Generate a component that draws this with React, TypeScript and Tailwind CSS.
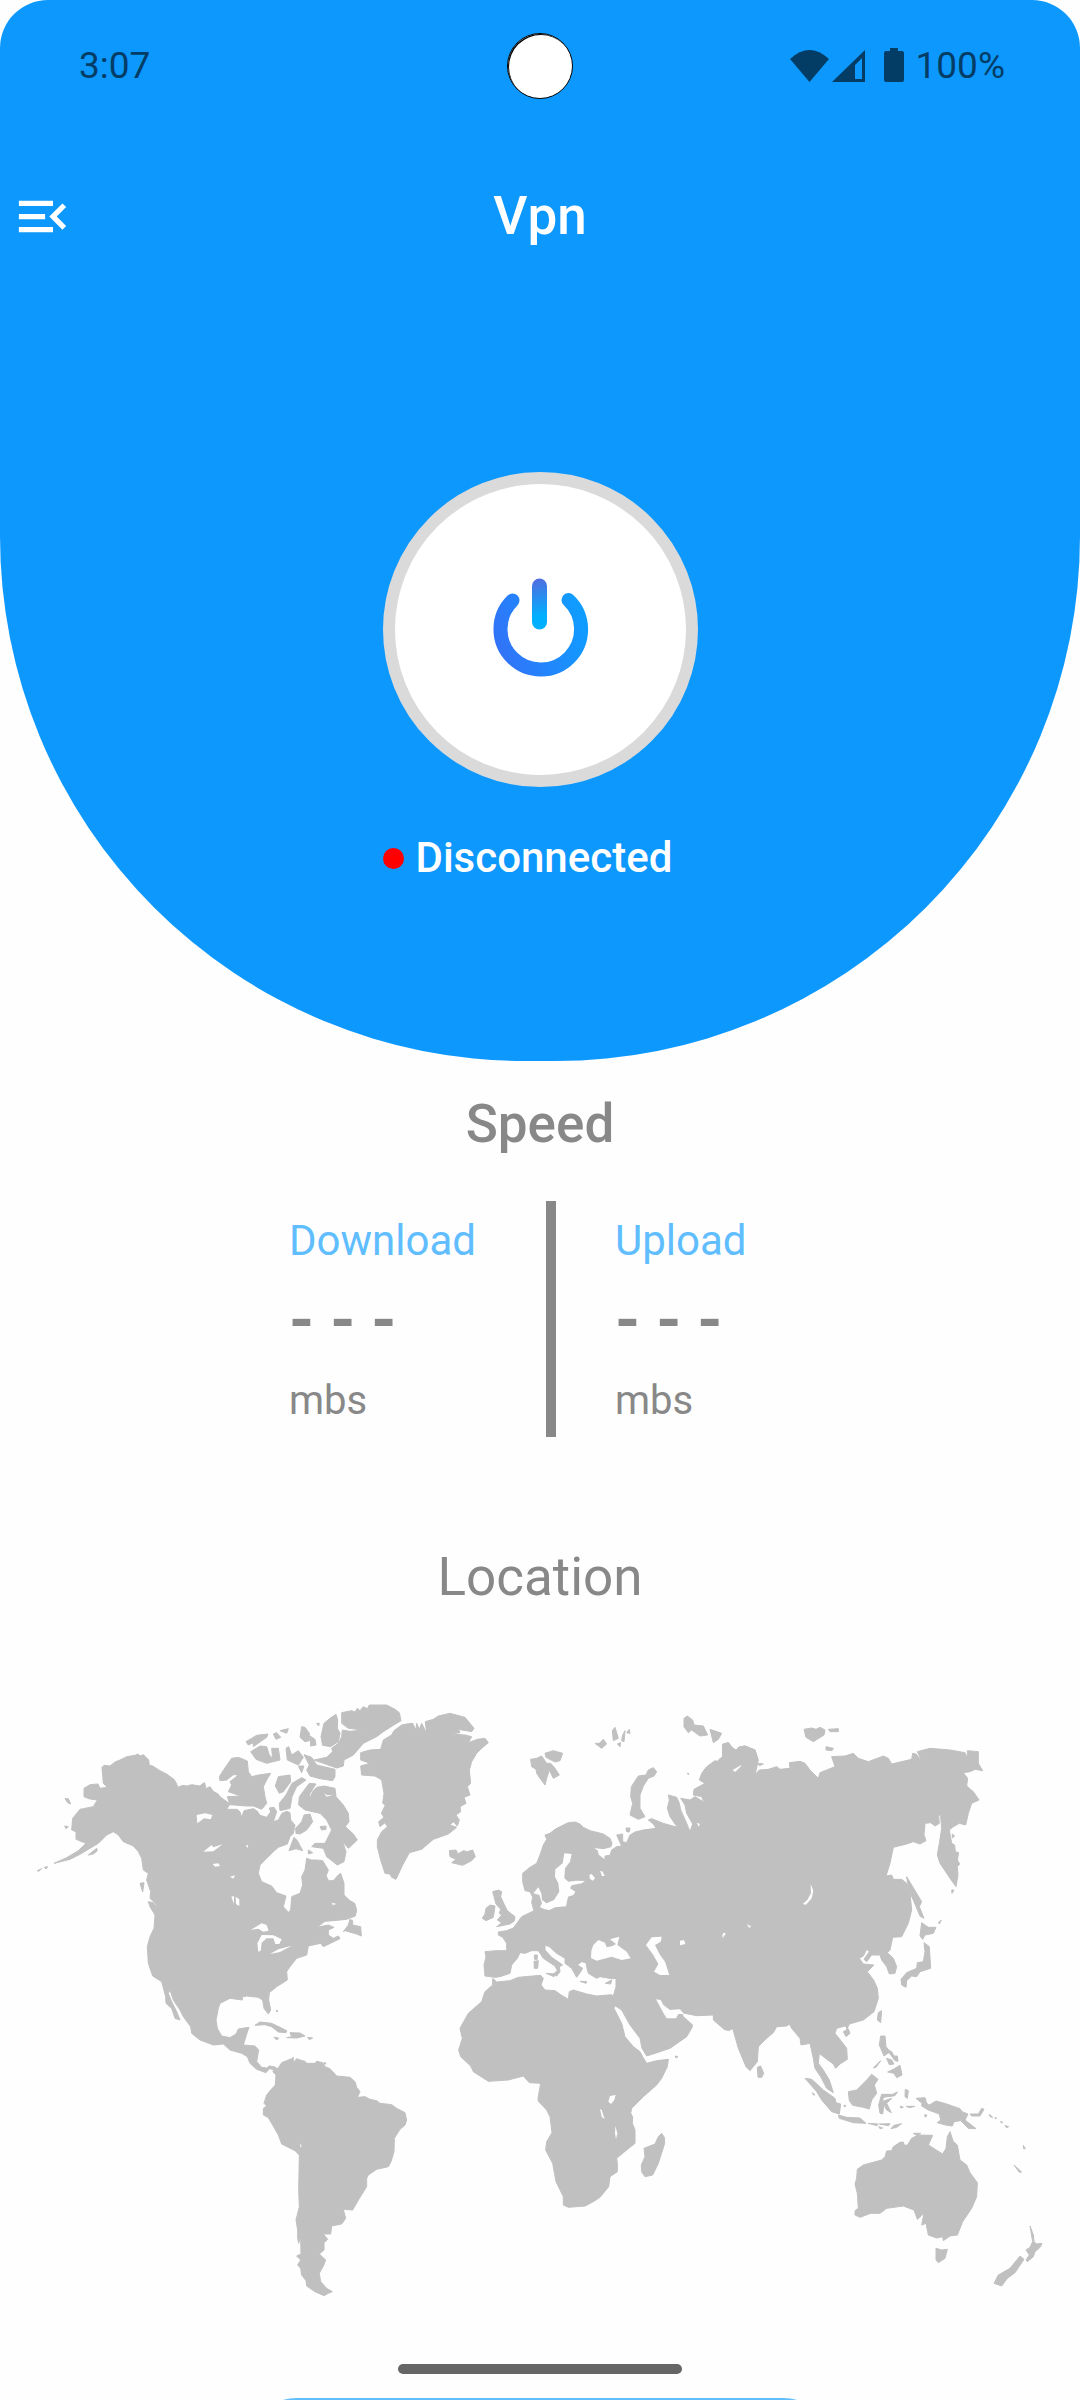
import React from "react";
import { MdMenuOpen } from "react-icons/md";

function StatusBar() {
  return (
    <div className="relative flex h-[132px] items-center justify-between pr-[75px] pl-[79px] text-[37px] leading-[44px] text-[#033d66]">
      <span>3:07</span>
      <span
        aria-hidden="true"
        className="absolute left-1/2 top-[33px] size-[66px] -translate-x-1/2 rounded-full border border-black bg-white shadow-[inset_1px_1px_0_#000]"
      />
      <div className="flex items-center">
        <svg viewBox="0 0 116 36" className="h-9 w-[116px]" aria-hidden="true" fill="currentColor">
          <path d="M0 11 Q19.500 -7 39 11 L19.500 34Z" />
          <path fillRule="evenodd" d="M42 34 75 2V34ZM65 31h7V10l-7 7Z" />
          <path d="M100 0h8v3h4q2 0 2 2v27q0 2-2 2H96q-2 0-2-2V5q0-2 2-2h4Z" />
        </svg>
        <span className="ml-2.5">100%</span>
      </div>
    </div>
  );
}

function PowerIcon() {
  return (
    <svg viewBox="0 0 120 120" className="size-[120px]" fill="none" strokeLinecap="round" aria-hidden="true">
      <defs>
        <linearGradient id="ring" gradientUnits="userSpaceOnUse" x1="15" y1="75" x2="100" y2="45">
          <stop offset="0" stopColor="#3272f8" />
          <stop offset="1" stopColor="#109cff" />
        </linearGradient>
        <linearGradient id="stem" gradientUnits="userSpaceOnUse" x1="55" y1="10" x2="61" y2="56">
          <stop offset="0" stopColor="#4f6ee0" />
          <stop offset="0.8" stopColor="#00b0ff" />
        </linearGradient>
      </defs>
      <path d="M32.500 30.500A40.300 40.300 0 1 0 88.500 30" stroke="url(#ring)" strokeWidth="14" />
      <path d="M59.500 16V52" stroke="url(#stem)" strokeWidth="15" />
    </svg>
  );
}

type Tile = { at: string; land: string[]; water: string[] };

const tiles: Tile[] = [
  {
    at: "translate(0 0)",
    land: [
      "306,262 312,256 330,258 345,246 360,240 380,230 405,226 414,222 420,228 430,224 446,240 448,256 458,258 480,272 500,282 508,288 522,298 528,308 534,322 548,316 560,318 575,314 600,318 606,312 614,308 618,326 630,320 640,334 654,342 660,350 690,372 680,388 712,388 720,396 725,412 732,392 760,386 772,394 780,406 800,412 812,396 808,384 822,382 830,395 820,425 835,420 846,400 860,394 870,398 872,420 885,435 880,460 870,470 862,492 835,502 820,515 800,535 780,555 775,580 785,605 815,618 830,638 858,648 850,680 865,697 872,690 875,650 900,640 908,615 905,590 915,570 920,535 935,540 950,540 968,542 985,570 978,588 986,602 1000,602 1015,585 1022,580 1032,610 1032,645 1050,662 1064,670 1070,690 1066,708 1040,718 1000,722 975,724 960,735 950,742 985,735 1002,742 985,750 985,765 1000,775 1015,768 1020,776 970,800 962,790 925,798 920,825 890,835 870,860 860,875 862,900 830,920 808,938 806,960 812,990 805,1002 792,985 788,960 775,952 740,948 726,951 728,960 712,958 690,955 660,970 655,985 648,1020 652,1045 665,1068 690,1073 708,1062 715,1047 747,1042 740,1062 730,1095 765,1098 776,1110 770,1145 785,1162 800,1164 808,1158 822,1160 840,1170 832,1185 818,1168 808,1166 798,1178 770,1168 750,1150 742,1130 725,1120 690,1110 670,1092 640,1095 600,1080 575,1060 572,1040 550,1010 540,990 520,960 510,930 505,940 515,965 530,995 540,1020 525,1015 515,985 498,970 497,950 485,905 458,888 445,850 442,800 450,770 462,745 465,705 450,680 445,665 460,668 475,685 485,705 468,672 450,655 452,635 440,600 445,580 430,570 425,535 415,515 400,498 370,485 355,465 340,455 320,465 295,490 270,505 240,523 210,538 162,550 200,533 235,512 258,490 228,478 228,455 215,450 218,415 240,388 250,386 280,380 292,360 270,357 252,350 252,325 270,314 294,312 300,325 322,322 310,310",
      "1030,755 1045,735 1050,718 1058,722 1058,735 1082,740 1084,768 1070,762 1035,752",
      "658,290 672,268 695,235 715,232 742,243 745,275 755,290 775,285 812,280 800,300 790,320 795,350 800,370 785,388 760,378 740,378 690,374 682,350 722,348 685,335 695,315 690,305 715,285 700,284 680,300 660,302",
      "835,290 870,285 872,305 850,335 838,340 826,318",
      "905,293 918,300 890,320 876,350 870,385 840,392 838,370 858,345 876,310",
      "752,215 780,198 800,200 808,225 818,235 815,205 835,205 840,240 800,250 768,238",
      "738,185 770,166 804,162 800,172 760,200 760,188 745,195",
      "820,162 830,158 842,172 828,178",
      "840,152 865,146 860,160",
      "905,140 915,142 928,160 928,182 915,185 900,172",
      "858,205 866,200 875,225 895,212 910,232 895,255 862,240",
      "930,168 945,178 948,195 932,198",
      "895,258 912,258 905,278",
      "887,445 905,425 912,405 930,402 938,425 920,450 900,462 888,460",
      "867,512 882,472 892,482 908,512 888,506",
      "925,510 938,518 925,522",
      "420,610 432,608 428,636",
      "265,525 290,505 292,512 280,522",
      "195,356 205,356 212,372 203,368",
      "194,438 205,440 198,446",
      "112,572 125,566 116,574",
      "133,562 143,560 138,567",
      "950,130 958,130 956,138",
    ],
    water: [
      "590,405 615,400 637,405 632,418 612,415 592,430",
      "610,515 635,495 640,502 668,493 640,514",
      "638,552 655,550 660,558 645,560",
      "694,650 702,648 702,672",
      "707,650 718,658 718,678 708,672",
      "690,590 705,586 700,596",
      "752,750 785,730 800,735 806,752 790,755 775,746",
      "775,815 772,790 785,765 820,766 845,778 838,792 826,792 820,775 800,775 785,788 782,812",
      "810,822 835,808 875,797 840,816",
      "738,495 745,496 742,505",
      "995,668 1010,672 998,675",
    ],
  },
  {
    at: "translate(660 0)",
    land: [
      "545,135 565,131 578,130 588,150 590,130 598,148 605,130 620,160 616,125 640,118 655,108 690,100 720,108 735,112 762,145 755,155 715,148 720,158 690,162 735,165 755,170 745,188 772,178 795,175 805,188 785,205 770,220 755,245 748,270 752,310 742,320 750,345 732,352 738,370 720,380 722,395 708,405 718,420 712,438 700,425 690,435 710,442 685,462 640,478 605,508 568,518 548,555 528,598 515,592 510,582 495,580 482,540 472,500 472,480 485,455 502,440 495,428 480,440 476,425 492,412 484,400 496,375 488,370 492,340 485,300 465,288 425,285 422,258 450,250 422,240 422,218 450,210 482,208 490,180 515,165 522,152",
      "365,98 395,92 405,96 412,85 420,92 430,80 442,86 448,75 500,75 525,88 538,98 543,122 520,136 490,155 470,170 430,190 400,225 372,240 370,258 350,264 310,250 282,240 320,232 338,215 335,205 355,190 365,170 367,150 390,154 430,150 385,145 365,130",
      "348,103 353,120 352,145 360,160 355,185 332,200 308,196 303,170 312,130 330,115",
      "252,224 275,232 290,255 345,268 345,290 338,302 300,296 270,288 260,270 268,255",
      "345,325 348,350 370,375 385,400 387,425 376,440 400,462 412,480 385,505 368,485 378,515 372,545 352,555 320,530 310,505 275,500 285,490 315,490 335,450 320,420 300,400 255,390 236,375 238,350 268,310 288,312 270,340 268,360 278,335 290,322 312,318",
      "300,440 318,438 318,448 305,450",
    ],
    water: ["312,340 322,346 340,344 320,350"],
  },
  {
    at: "translate(600 960)",
    land: [
      "218,215 232,208 245,188 275,176 280,172 280,188 290,176 300,180 315,184 320,190 345,190 350,184 368,188 375,200 390,206 410,228 450,232 465,245 470,262 480,275 472,292 495,290 510,298 530,302 540,310 575,314 590,325 615,338 620,360 615,375 600,388 583,415 582,455 573,485 565,500 530,508 505,525 500,535 500,560 475,600 458,630 430,628 437,655 425,672 395,678 392,702 370,702 383,718 372,728 372,750 358,762 377,780 370,798 358,820 362,845 380,865 397,875 385,880 372,887 345,875 320,858 318,842 305,825 302,805 293,795 302,780 290,768 303,762 302,710 296,730 293,715 293,690 288,660 298,620 296,570 298,465 285,452 245,432 235,405 215,370 204,352 190,345 190,325 200,318 192,310 200,285 212,270 226,255 228,225",
      "165,76 180,66 215,70 240,82 260,92 258,98 235,96 215,80 195,74",
      "260,113 275,110 270,98 300,99 315,108 290,114",
      "222,112 236,114 230,120",
      "323,112 338,114 328,119",
      "374,186 378,192 372,192",
      "230,30 234,34 229,34",
    ],
    water: ["300,430 305,438 302,443"],
  },
  {
    at: "translate(1290 840)",
    land: [
      "188,55 200,66 240,62 265,52 332,46 340,55 333,75 345,90 375,92 395,106 415,118 418,95 430,90 470,102 500,108 545,104 560,120 552,145 575,190 585,230 610,260 630,275 638,290 650,310 680,302 715,298 712,320 695,355 680,375 640,410 605,445 602,460 608,470 607,490 615,510 615,550 590,570 560,595 562,610 562,635 540,650 536,680 510,712 490,725 465,738 415,742 400,735 400,710 378,665 368,610 347,570 350,545 366,518 360,470 350,450 325,424 324,415 332,370 298,368 280,348 235,360 175,364 130,335 122,318 92,290 86,270 97,235 90,205 115,160 155,125 165,95 188,75",
      "695,520 703,532 704,550 685,610 668,645 645,650 635,635 634,615 645,590 642,565 675,552 685,530",
      "735,288 744,290 738,294",
    ],
    water: [
      "540,408 557,405 553,420 543,432 535,425",
      "510,447 515,450 524,478 515,470",
      "556,498 562,520 558,537 555,520",
    ],
  },
  {
    at: "translate(1290 60)",
    land: [
      "165,828 162,795 168,770 165,755 200,752 230,752 230,730 218,712 205,705 205,696 230,692 250,684 262,668 275,650 300,638 312,632 305,608 308,592 300,575 285,572 278,545 278,520 300,502 320,490 330,465 340,435 350,418 345,405 360,400 375,388 400,375 415,368 435,366 450,372 460,382 480,392 500,397 520,402 540,415 546,430 543,440 520,446 488,442 502,452 505,465 525,480 525,468 540,466 545,450 560,440 575,438 560,405 578,402 578,425 590,428 600,405 615,396 640,390 678,385 670,372 655,360 665,356 700,370 742,382 720,350 712,325 718,300 715,285 740,292 748,310 752,330 770,370 780,395 788,372 770,340 765,315 752,295 780,300 795,290 820,305 828,320 815,290 790,285 792,268 825,250 808,240 815,220 830,200 855,182 865,185 878,175 878,132 895,128 905,140 920,155 925,142 945,138 975,150 985,180 975,225 990,215 1010,215 1010,985 910,985 895,992 880,985 878,965 850,945 800,947 755,938 760,950 788,975 785,985 770,1010 720,1045 675,1060 650,1068 636,1045 630,1015 600,975 575,930 552,915 548,895 558,860 558,835 545,836 510,830 500,835 475,820 470,800 468,788 455,785 442,795 458,805 452,815 440,832 432,818 425,805 405,790 405,775 380,760 358,740 345,735 345,750 365,772 398,795 388,800 390,815 380,828 370,822 382,812 375,798 340,775 325,752 305,752 285,760 270,758 262,775 245,795 240,820 210,830 195,832",
      "348,820 376,822 372,830",
      "313,765 322,765 322,778 314,778",
      "312,784 325,782 323,805 313,805",
      "450,844 470,845 468,850",
      "526,850 545,840 542,852",
      "188,575 205,570 215,575 212,590 222,612 232,632 255,650 253,663 240,672 200,680 215,668 202,660 215,645 208,640 212,628 198,612 192,590",
      "168,625 180,615 195,618 190,652 168,662 157,655 165,642",
      "58,452 78,450 84,462 100,452 112,455 128,450 136,470 125,482 98,496 65,488 78,478 60,470",
      "302,178 320,175 335,168 350,190 362,190 375,205 388,225 370,235 358,210 350,235 345,255 332,238 320,220 318,208 305,200",
      "345,160 370,152 398,160 390,182 375,186 348,172",
      "495,130 508,130 520,118 530,132 515,145",
      "547,92 555,82 565,115 550,122",
      "577,108 585,92 582,125 575,122",
      "590,98 598,88 600,100",
      "562,132 572,128 570,140",
      "655,210 670,203 680,215 672,228 655,235 640,258 630,285 630,325 645,350 625,358 600,345 608,310 602,290 604,260 625,228 648,225",
      "762,55 772,48 788,60 792,75 820,78 833,105 810,108 785,90 775,98 762,80",
      "840,88 875,100 865,118 850,128",
      "588,384 600,384 598,396 590,395",
      "772,220 776,220 775,224",
    ],
    water: [
      "403,460 425,462 420,485 405,505 403,535 415,545 440,542 465,543 455,550 425,556 420,565 436,575 430,585 414,590 408,619 375,622 358,630 345,628 330,622 336,610 328,585 310,580 325,562 334,580 336,600 350,610 372,600 388,575 385,550 375,530 376,508 398,490",
      "484,752 490,735 505,720 525,728 530,742 548,738 558,732 540,718 568,710 562,735 590,755 602,775 575,780 545,770 500,782 483,774",
      "648,735 665,712 695,710 692,725 675,735 690,765 705,785 718,825 690,825 672,815 685,792 670,765",
      "750,722 762,720 766,732 750,736",
      "878,715 880,700 888,700",
      "478,525 485,522 495,535 488,542 480,536",
      "510,512 518,515 524,528 516,528",
      "678,898 692,900 700,915 720,930 750,928 762,942 745,942 738,955 710,955 700,938",
      "908,210 935,194 930,202 915,216",
      "800,368 810,372 806,380",
      "950,672 962,680 958,684",
    ],
  },
  {
    at: "translate(2160 60)",
    land: [
      "-20,235 -5,180 8,170 8,135 25,128 35,142 48,150 60,140 75,138 105,150 112,175 108,205 98,232 118,210 145,208 170,200 180,208 210,205 208,188 240,184 255,190 270,210 295,235 300,218 345,200 335,170 375,168 400,160 415,175 445,185 490,168 505,175 515,192 540,186 575,178 578,160 588,162 605,182 592,155 630,145 690,150 735,158 742,175 742,152 775,155 775,190 788,212 765,208 750,215 730,218 743,235 740,258 760,275 777,300 755,310 745,340 737,375 718,370 700,380 688,390 695,430 704,435 706,455 716,458 712,480 719,492 712,500 714,525 708,560 690,535 660,490 652,465 658,430 665,385 662,350 655,338 658,370 645,378 632,368 615,370 612,405 618,422 600,432 580,425 560,432 520,442 510,490 498,528 515,525 520,538 545,538 560,550 570,580 575,630 565,670 545,710 518,712 510,750 502,758 520,775 530,800 525,820 508,822 500,800 485,780 480,765 455,765 440,785 432,778 448,755 440,748 430,768 418,775 430,792 462,795 442,815 462,842 472,865 475,895 462,935 430,960 388,972 382,985 375,978 350,985 345,1000 365,1025 380,1045 382,1078 360,1092 347,1105 340,1092 310,1070 298,1060 295,1090 310,1110 328,1140 340,1178 320,1165 302,1130 285,1105 280,1075 270,1030 243,1035 240,1015 215,985 208,972 200,978 170,980 160,998 140,1015 115,1040 112,1085 90,1112 78,1100 55,1045 38,985 15,990 -20,960",
      "560,530 575,555 605,605 598,620 612,655 600,648 582,605 566,570",
      "605,668 625,682 648,682 640,700 615,705 608,718 600,708",
      "612,728 628,740 632,805 600,815 590,830 575,828 560,842 558,862 545,855 543,838 560,818 590,805 592,788 610,785 615,755",
      "252,88 275,84 288,88 300,82 315,90 312,105 280,125 258,112",
      "325,88 355,86 355,95 330,95",
      "318,140 340,145 336,152 318,150",
      "115,190 130,192 118,197",
      "695,570 702,570 696,580",
      "655,668 664,660 658,672",
      "697,402 704,408 697,414",
    ],
    water: ["272,552 280,572 275,595 258,614 248,612 262,600 273,580", "82,672 88,678 97,682", "5,712 10,698 15,700"],
  },
  {
    at: "translate(2160 900)",
    land: [
      "370,155 380,150 380,138 386,150 390,160 378,170",
      "112,262 122,258 131,280 125,292 114,292",
      "475,98 485,92 482,128 472,120",
      "482,168 495,168 498,200 510,215 492,228 478,195",
      "500,208 515,215 522,228 532,228 534,244 525,242",
      "500,235 515,240 522,252 508,254",
      "540,256 546,285 530,293 522,280 503,276 520,268",
      "460,264 482,242 468,262",
      "255,295 275,298 310,330 345,355 348,368 362,372 358,402 335,395 305,360 290,335",
      "355,405 380,412 420,414 438,430 400,428 358,415",
      "445,430 475,432 470,437",
      "478,432 510,431 505,437",
      "513,446 522,436 545,431 530,442",
      "476,440 488,444 480,446",
      "385,335 410,330 440,300 455,283 474,298 463,315 470,340 455,360 448,387 430,382 398,376 388,362",
      "485,343 518,343 532,336 525,347 490,352 488,364 515,355 500,370 514,398 500,390 492,374 488,402 480,400 476,375",
      "556,328 565,332 562,355 555,350",
      "558,379 584,379 570,383",
      "542,378 550,382 542,384",
      "588,355 615,353 620,370 628,375 648,363 680,372 720,386 726,395 744,402 735,420 768,446 745,445 722,422 702,425 697,438 680,436 652,428 662,420 658,402 625,390 605,378 606,370",
      "750,402 775,402 785,385 792,388 780,408 755,408",
      "808,403 818,412 810,410",
      "825,412 830,415 826,416",
      "842,424 848,427 844,429",
      "855,437 866,440 860,443",
      "882,555 905,576 898,577",
      "910,496 916,506 911,506",
      "614,404 621,406 616,412",
      "412,568 430,555 485,540 495,530 500,513 515,512 520,500 540,487 550,486 552,495 562,496 575,475 595,465 638,466 625,495 668,522 678,505 682,470 690,455 700,485 712,495 720,540 740,555 750,578 772,608 770,650 755,685 728,725 712,765 690,768 670,782 668,770 650,774 625,765 618,730 605,735 612,700 592,718 582,690 550,678 500,685 480,700 452,700 420,712 405,705 405,692 415,685 412,640 405,612 410,595",
      "580,460 602,460 590,466",
      "648,805 665,810 682,808 675,835 655,848 648,840",
      "930,738 940,765 942,785 950,792 966,790 960,802 945,815 940,830 922,845 918,840 928,825 918,810 930,802 938,785",
      "900,828 912,838 885,878 862,895 845,918 822,910 835,885 870,865",
      "372,375 378,378 373,380",
      "278,338 284,345 280,345",
    ],
    water: [],
  },
];

function WorldMap() {
  return (
    <svg viewBox="0 0 3240 1920" className="mt-[71px] w-full shrink-0" role="img" aria-label="World map">
      {tiles.map((tile) => (
        <g key={tile.at} transform={tile.at} fill="#c0c0c0" stroke="#c0c0c0" strokeWidth="3" strokeLinejoin="round">
          {tile.land.map((points) => (
            <polygon key={points} points={points} />
          ))}
        </g>
      ))}
      {tiles.map((tile) => (
        <g key={tile.at} transform={tile.at} fill="#fefefe">
          {tile.water.map((points) => (
            <polygon key={points} points={points} />
          ))}
        </g>
      ))}
    </svg>
  );
}

function SpeedColumn({ label, className }: { label: string; className: string }) {
  return (
    <div className={`flex flex-col gap-6 pt-3 pb-2 leading-[56px] ${className}`}>
      <span className="text-[42px] text-[#60bdff]">{label}</span>
      <span className="text-[64px] font-bold">- - -</span>
      <span className="text-[40px]">mbs</span>
    </div>
  );
}

export default function App() {
  return (
    <main className="relative flex h-screen flex-col overflow-hidden bg-[#fefefe] font-[Roboto,sans-serif] text-[#888888]">
      <header className="shrink-0 rounded-t-[48px] rounded-b-[525px] bg-[#0d98fd] pb-[175px] text-white">
        <StatusBar />
        <div className="grid h-[168px] grid-cols-[1fr_auto_1fr] items-center px-[11px]">
          <button type="button" aria-label="Open menu" className="justify-self-start">
            <MdMenuOpen className="size-[63px]" />
          </button>
          <h1 className="text-[53px] leading-[64px] font-medium">Vpn</h1>
        </div>
        <div className="mx-auto mt-[172px] w-[315px]">
          <button
            type="button"
            aria-label="Connect"
            className="flex size-[315px] items-center justify-center rounded-full border-[12px] border-[#dadada] bg-white"
          >
            <PowerIcon />
          </button>
          <p className="mt-[43px] flex items-center gap-3 text-[42px] leading-[56px] font-medium">
            <span className="size-[21px] shrink-0 rounded-full bg-[#ff0000]" />
            Disconnected
          </p>
        </div>
      </header>

      <h2 className="mt-[31px] text-center text-[53px] leading-[64px] font-medium">Speed</h2>
      <div className="mt-[45px] flex justify-center gap-[59px]">
        <SpeedColumn label="Download" className="w-[198px]" />
        <div className="w-2.5 bg-[#888888]" />
        <SpeedColumn label="Upload" className="w-[176px]" />
      </div>

      <h2 className="mt-[108px] text-center text-[53px] leading-[64px]">Location</h2>
      <WorldMap />

      <button
        type="button"
        aria-label="Choose location"
        className="mx-auto mt-[78px] h-[126px] w-[590px] shrink-0 rounded-[52px] bg-[#60bdff]"
      />
      <div className="absolute bottom-[26px] left-1/2 h-2.5 w-[284px] -translate-x-1/2 rounded-full bg-[#666666]" />
    </main>
  );
}
